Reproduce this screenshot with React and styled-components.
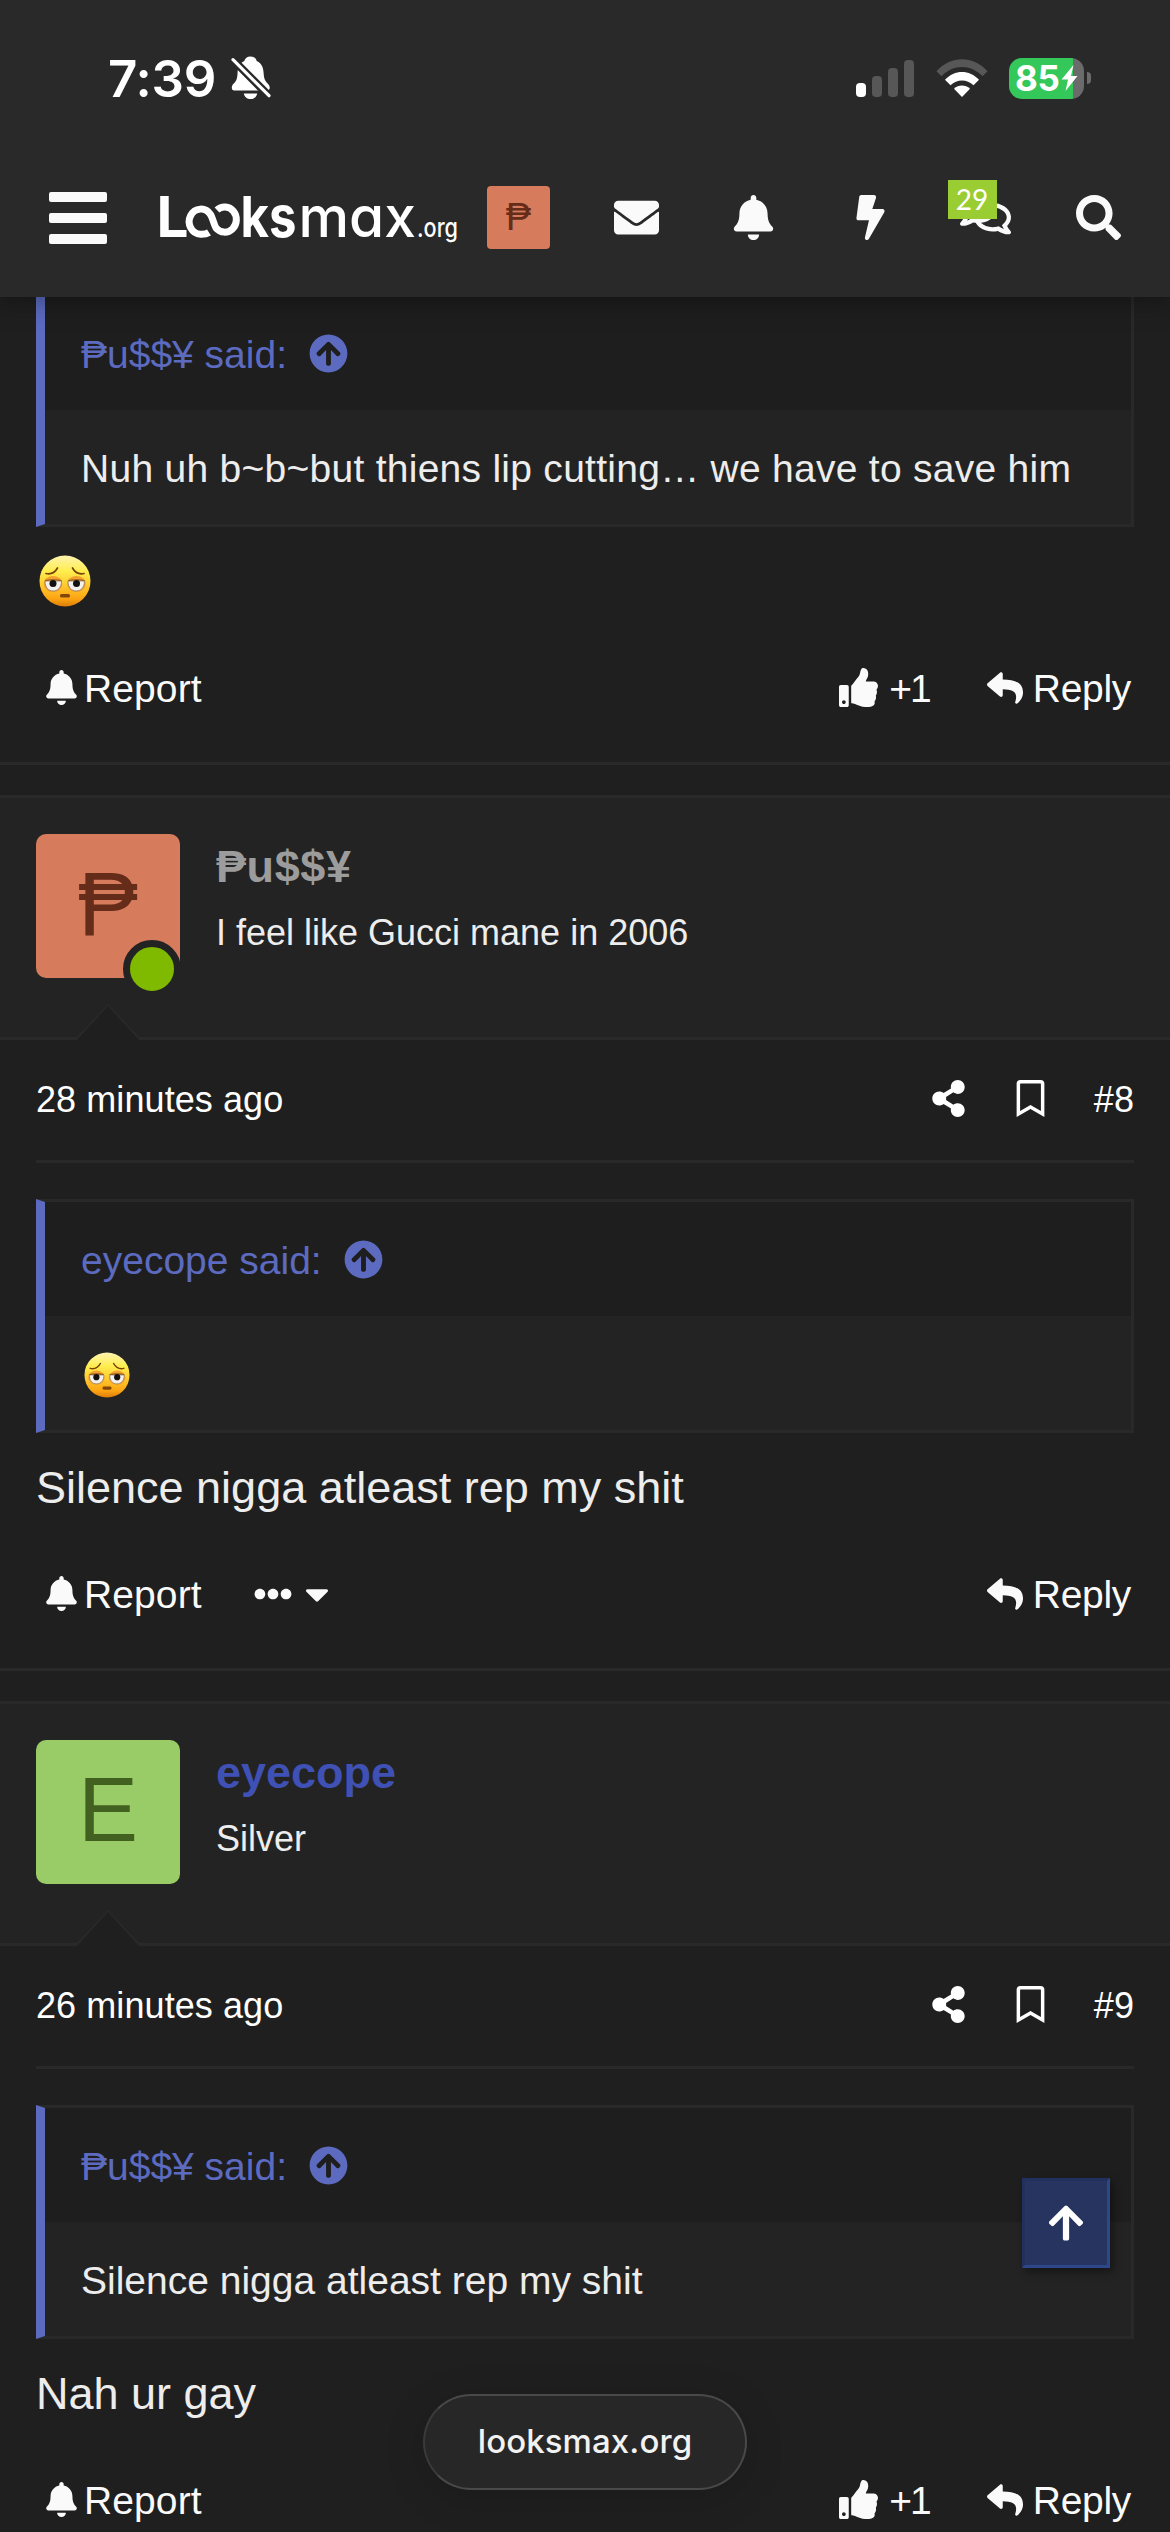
import React from 'react'
import styled, { createGlobalStyle } from 'styled-components';
import {
    FaEnvelope, FaBell, FaBolt, FaRegComments, FaSearch, FaArrowCircleUp, FaArrowUp,
    FaThumbsUp, FaReply, FaShareAlt, FaRegBookmark, FaEllipsisH, FaCaretDown
} from 'react-icons/fa';

const posts = [
    {
        id: 8,
        user: '₱u$$¥',
        title: 'I feel like Gucci mane in 2006',
        letter: '₱',
        bg: '#d67b5c',
        fg: '#662c1a',
        nameColor: '#9c9c9c',
        nameSpacing: '0.6px',
        online: true,
        time: '28 minutes ago',
        quote: { user: 'eyecope', emoji: true },
        text: 'Silence nigga atleast rep my shit',
        own: true,
    },
    {
        id: 9,
        user: 'eyecope',
        title: 'Silver',
        letter: 'E',
        bg: '#99cc66',
        fg: '#426020',
        nameColor: '#3f51b5',
        time: '26 minutes ago',
        quote: { user: '₱u$$¥', text: 'Silence nigga atleast rep my shit' },
        text: 'Nah ur gay',
    },
]

function TiredFace({ size }) {
    return (
        <svg width={size} height={size} viewBox="0 0 52 52">
            <defs>
                <linearGradient id="face" x1="0" y1="0" x2="0" y2="1">
                    <stop offset="0" stopColor="#fff3b0" />
                    <stop offset="0.3" stopColor="#ffee50" />
                    <stop offset="0.6" stopColor="#ffc82c" />
                    <stop offset="0.85" stopColor="#fba413" />
                    <stop offset="1" stopColor="#dd7c08" />
                </linearGradient>
            </defs>
            <circle cx="26" cy="26" r="25.5" fill="url(#face)" />
            <path d="M7 18.500c4.500 1 9-1 11.500-5.500M45 18.500c-4.500 1-9-1-11.500-5.500" fill="none" stroke="#7a4209" strokeWidth="1.700" strokeLinecap="round" />
            <ellipse cx="14" cy="29" rx="9.300" ry="8" fill="#f3a02f" />
            <ellipse cx="37.500" cy="29" rx="9.300" ry="8" fill="#f3a02f" />
            <path d="M6 26h16.500c0 6.500-3.500 10-8.300 10S6 32.500 6 26zM29 26h16.500c0 6.500-3.500 10-8.300 10S29 32.500 29 26z" fill="#f4f1ec" stroke="#8f7a60" strokeWidth="0.800" />
            <path d="M6 25.500c4-1 13-1 16.500 0M29 25.500c4-1 13-1 16.500 0" fill="none" stroke="#8d5a1c" strokeWidth="1.200" />
            <circle cx="14" cy="28.500" r="3.500" fill="#111" />
            <circle cx="37.500" cy="28.500" r="3.500" fill="#111" />
            <rect x="21" y="39" width="10" height="3.600" rx="1.500" fill="#83460a" />
        </svg>
    )
}

function BellSlash() {
    return (
        <svg width="40" height="44" viewBox="0 0 40 44">
            <path d="M19.500 0.500c-3.500 0-5.500 1.800-6.200 4.500C8 7.500 6.800 12 6.500 18c-.3 5-1.500 7.500-4 9.800C.2 30 0 34.500 3.200 34.500h33c3.500 0 3-4.500.8-6.700-2.500-2.300-4-4.800-4.300-9.800-.3-6-1.500-10.500-7-13-.7-2.700-2.700-4.500-6.200-4.500zM12.800 37.500h13.400c-.6 3.500-3.200 5.500-6.700 5.500s-6.100-2-6.700-5.500z" fill="#fff" />
            <path d="M2.500 4.200L38 40" stroke="#292929" strokeWidth="8" strokeLinecap="square" />
            <path d="M2 3.700L38 39.700" stroke="#fff" strokeWidth="3.200" strokeLinecap="round" />
        </svg>
    )
}

function Wifi() {
    return (
        <svg width="52" height="38" viewBox="0 0 52 38">
            <path d="M0.500 12.300C14.500-3.700 37.500-3.700 51.500 12.300L46.500 17.200C35 4.800 17 4.800 5.500 17.200z" fill="#575757" />
            <path d="M9 20.700C18.500 10.300 33.500 10.300 43 20.700L37.500 26.200C31 19.800 21 19.800 14.500 26.200z" fill="#fff" />
            <path d="M18 29.800c4.500-4.400 11.500-4.400 16 0L26 38z" fill="#fff" />
        </svg>
    )
}

function LogoMark() {
    return (
        <svg width="314" height="90" viewBox="-6 -14 314 90">
            <g fill="#fff" fontFamily="Inter, sans-serif">
                <text x="-3.500" y="50" fontSize="57" fontWeight="700" textLength="32" lengthAdjust="spacingAndGlyphs">L</text>
                <path d="M49 45.500C46 47.500 43 47.300 40.500 47.300A11.700 12.600 0 1 1 50.500 27.500C53 31.500 53 35 56 41A11.700 12.600 0 1 0 57 23" fill="none" stroke="#fff" strokeWidth="7" />
                <text x="80.500" y="50" fontSize="57" fontWeight="700" textLength="56" lengthAdjust="spacingAndGlyphs">ks</text>
                <text x="138.500" y="50" fontSize="57" fontWeight="450" textLength="117.500" lengthAdjust="spacingAndGlyphs" style={{ fontFeatureSettings: '"cv11"' }}>max</text>
                <text x="257" y="50" fontSize="26" fontWeight="500" textLength="41" lengthAdjust="spacingAndGlyphs">.org</text>
            </g>
        </svg>
    )
}

function Quote({ user, text, emoji, spacing }) {
    return (
        <QuoteBox>
            <QuoteHead>
                <QuoteText $accent>{user} said:</QuoteText>
                <FaArrowCircleUp size={39} />
            </QuoteHead>
            <QuoteBody>
                {emoji && <QuoteEmoji><TiredFace size={46} /></QuoteEmoji>}
                {text && <QuoteText $spacing={spacing}>{text}</QuoteText>}
            </QuoteBody>
        </QuoteBox>
    )
}

function ActionBar({ own }) {
    return (
        <Actions>
            <Action>
                <FaBell size={35} />
                <ActionText $gap="5px" $spacing="0.1px">Report</ActionText>
            </Action>
            {own && (
                <MoreButton>
                    <FaEllipsisH size={38} />
                    <FaCaretDown size={38} />
                </MoreButton>
            )}
            <ActionsRight>
                {!own && (
                    <Action>
                        <FaThumbsUp size={39} />
                        <ActionText $gap="11px" $spacing="-2px">+1</ActionText>
                    </Action>
                )}
                <Action>
                    <FaReply size={36} />
                    <ActionText $gap="10px" $spacing="-0.3px">Reply</ActionText>
                </Action>
            </ActionsRight>
        </Actions>
    )
}

function Post({ post }) {
    return (
        <Message>
            <UserBar>
                <Avatar $bg={post.bg} $fg={post.fg}>
                    {post.letter}
                    {post.online && <OnlineDot />}
                </Avatar>
                <UserInfo>
                    <UserName $color={post.nameColor} $spacing={post.nameSpacing}>{post.user}</UserName>
                    <UserTitle>{post.title}</UserTitle>
                </UserInfo>
            </UserBar>
            <Content>
                <Attribution>
                    <Meta>{post.time}</Meta>
                    <AttributionIcons>
                        <FaShareAlt size={37} />
                        <FaRegBookmark size={37} />
                        <Meta>#{post.id}</Meta>
                    </AttributionIcons>
                </Attribution>
                <Quote {...post.quote} />
                <BodyText>{post.text}</BodyText>
                <ActionBar own={post.own} />
            </Content>
        </Message>
    )
}

function App() {
    return (
        <Page>
            <GlobalStyle />
            <Header>
                <StatusBar>
                    <Clock>7:39</Clock>
                    <BellSlash />
                    <StatusRight>
                        <Signal>
                            <SignalBar $h={14} $on />
                            <SignalBar $h={21} />
                            <SignalBar $h={29} />
                            <SignalBar $h={37} />
                        </Signal>
                        <Wifi />
                        <Battery>
                            <BatteryBody>
                                85
                                <svg width="17" height="26" viewBox="0 0 17 26">
                                    <path d="M12.500 0L0.500 14.500h6.500L4.500 26 16.500 11h-6.500z" fill="#fff" />
                                </svg>
                            </BatteryBody>
                            <BatteryTip />
                        </Battery>
                    </StatusRight>
                </StatusBar>
                <NavBar>
                    <Burger><i /><i /><i /></Burger>
                    <Logo><LogoMark /></Logo>
                    <NavAvatar>₱</NavAvatar>
                    <NavIcons>
                        <NavItem><FaEnvelope size={45} /></NavItem>
                        <NavItem $nudge="2px"><FaBell size={45} /></NavItem>
                        <NavItem $nudge="5px"><FaBolt size={45} /></NavItem>
                        <NavItem $nudge="4px" $lift="6px">
                            <FaRegComments size={51} />
                            <Badge>29</Badge>
                        </NavItem>
                        <NavItem><FaSearch size={45} /></NavItem>
                    </NavIcons>
                </NavBar>
            </Header>

            <FirstMessage>
                <Content>
                    <Quote user="₱u$$¥" text="Nuh uh b~b~but thiens lip cutting… we have to save him" spacing="0.27px" />
                    <EmojiLine><TiredFace size={52} /></EmojiLine>
                    <ActionBar />
                </Content>
            </FirstMessage>
            {posts.map(post => <Post key={post.id} post={post} />)}

            <ScrollTop><FaArrowUp size={40} /></ScrollTop>
            <AddressPill>looksmax.org</AddressPill>
        </Page>
    )
}

export default App

const GlobalStyle = createGlobalStyle`
    body{
        margin:0;
        background:#1f1f1f;
    }
    *{
        box-sizing:border-box;
    }
    svg{
        display:block;
        flex-shrink:0;
    }
`
const Page = styled.div`
    position:relative;
    width:1170px;
    height:2532px;
    overflow:hidden;
    background:#1f1f1f;
    color:#ededed;
    font-family:"Liberation Sans", Arial, sans-serif;
    white-space:nowrap;
`
const Header = styled.header`
    position:relative;
    z-index:2;
    height:297px;
    background:#292929;
    box-shadow:0 0 26px 4px rgba(0, 0, 0, 0.35);
`
const StatusBar = styled.div`
    display:flex;
    height:156px;
    padding:0 79px 0 108px;
    align-items:center;
`
const Clock = styled.span`
    width:123px;
    font-family:Inter, sans-serif;
    font-size:51px;
    font-weight:600;
    color:#fff;
    letter-spacing:-0.2px;
`
const StatusRight = styled.div`
    display:flex;
    align-items:center;
    margin-left:auto;
`
const Signal = styled.div`
    display:flex;
    align-items:flex-end;
    gap:6px;
    height:37px;
    margin-right:22px;
`
const SignalBar = styled.i`
    width:10px;
    height:${p => p.$h}px;
    border-radius:4px;
    background:${p => p.$on ? '#fff' : '#575757'};
`
const Battery = styled.div`
    display:flex;
    align-items:center;
    margin-left:21px;
    gap:3px;
`
const BatteryBody = styled.div`
    display:flex;
    align-items:center;
    width:75px;
    height:41px;
    padding-left:6px;
    border-radius:13px;
    background:linear-gradient(90deg, #34c759 64px, #6b6b6b 64px);
    color:#fff;
    font-family:Inter, sans-serif;
    font-size:35px;
    font-weight:700;
    letter-spacing:-0.3px;
    svg{
        margin-left:1px;
    }
`
const BatteryTip = styled.i`
    width:4px;
    height:12px;
    border-radius:0 4px 4px 0;
    background:#6b6b6b;
`
const NavBar = styled.nav`
    display:flex;
    align-items:center;
    height:123px;
    padding-left:49px;
`
const Burger = styled.div`
    display:flex;
    flex-direction:column;
    gap:11px;
    width:58px;
    i{
        height:10px;
        border-radius:2px;
        background:#fafafa;
    }
`
const Logo = styled.div`
    width:333px;
    margin-left:47px;
`
const NavAvatar = styled.div`
    display:flex;
    align-items:center;
    justify-content:center;
    width:63px;
    height:63px;
    border-radius:4px;
    background:#d67b5c;
    color:#662c1a;
    font-size:38px;
`
const NavIcons = styled.div`
    display:flex;
    margin-left:29px;
    color:#fafafa;
`
const NavItem = styled.div`
    position:relative;
    display:flex;
    align-items:center;
    justify-content:center;
    width:115.5px;
    height:51px;
    padding-bottom:${p => p.$lift || 0};
    padding-left:${p => p.$nudge || 0};
`
const Badge = styled.span`
    position:absolute;
    top:-12px;
    left:22px;
    width:49px;
    height:39px;
    line-height:39px;
    text-align:center;
    background:#9acd32;
    color:#fff;
    font-family:Lato, sans-serif;
    font-size:28px;
`
const FirstMessage = styled.article`
    margin-top:-4px;
    border-bottom:3px solid #292929;
`
const Message = styled.article`
    margin-top:30px;
    border-top:3px solid #292929;
    border-bottom:3px solid #292929;
`
const UserBar = styled.div`
    position:relative;
    display:flex;
    height:242px;
    padding:36px;
    background:#232323;
    border-bottom:3px solid #292929;
    &::before,
    &::after{
        content:"";
        position:absolute;
        left:74px;
        bottom:-3px;
        border:34px solid transparent;
        border-top:0;
        border-bottom:36px solid #292929;
    }
    &::after{
        left:76px;
        bottom:-4px;
        border-width:0 32px 35px;
        border-bottom-color:#1f1f1f;
    }
`
const Avatar = styled.div`
    position:relative;
    width:144px;
    height:144px;
    border-radius:10px;
    background:${p => p.$bg};
    color:${p => p.$fg};
    font-size:90px;
    line-height:140px;
    text-align:center;
`
const OnlineDot = styled.i`
    position:absolute;
    right:-1px;
    bottom:-20px;
    width:58px;
    height:58px;
    border-radius:50%;
    border:7px solid #232323;
    background:#7fb900;
`
const UserInfo = styled.div`
    margin-left:36px;
    padding-top:3px;
`
const UserName = styled.div`
    font-size:45px;
    font-weight:700;
    line-height:60px;
    letter-spacing:${p => p.$spacing || 'normal'};
    color:${p => p.$color};
`
const UserTitle = styled.div`
    margin-top:11px;
    font-size:36px;
    line-height:50px;
`
const Content = styled.div`
    padding:0 36px;
`
const Attribution = styled.div`
    display:flex;
    align-items:center;
    justify-content:space-between;
    height:123px;
    margin-bottom:36px;
    border-bottom:3px solid #292929;
    color:#fff;
    svg{
        margin-bottom:3px;
    }
`
const AttributionIcons = styled.div`
    display:flex;
    align-items:center;
    gap:45px;
`
const Meta = styled.span`
    font-size:36px;
    letter-spacing:0.08px;
`
const QuoteBox = styled.blockquote`
    margin:0;
    height:234px;
    border:3px solid #292929;
    border-left:9px solid #5c6bc0;
`
const QuoteHead = styled.div`
    display:flex;
    align-items:center;
    gap:22px;
    height:114px;
    padding-left:36px;
    background:#1e1e1e;
    color:#5c6bc0;
`
const QuoteBody = styled.div`
    display:flex;
    align-items:center;
    height:114px;
    padding-left:36px;
    background:#232323;
`
const QuoteEmoji = styled.span`
    padding:3px 0 0 3px;
`
const QuoteText = styled.span`
    padding-top:4px;
    font-size:39px;
    letter-spacing:${p => p.$spacing || 'normal'};
    color:${p => p.$accent ? '#5c6bc0' : '#ededed'};
`
const BodyText = styled.p`
    margin:0;
    padding-top:23px;
    font-size:45px;
    line-height:63px;
`
const EmojiLine = styled.div`
    display:flex;
    align-items:center;
    height:86px;
    padding:22px 0 0 3px;
`
const Actions = styled.div`
    display:flex;
    align-items:center;
    height:149px;
    padding:0 3px 0 8px;
    color:#fafafa;
`
const ActionsRight = styled.div`
    display:flex;
    gap:57px;
    margin-left:auto;
`
const Action = styled.div`
    display:flex;
    align-items:center;
`
const ActionText = styled.span`
    padding-top:2px;
    margin-left:${p => p.$gap};
    font-size:39px;
    letter-spacing:${p => p.$spacing};
`
const MoreButton = styled.div`
    display:flex;
    align-items:center;
    gap:6px;
    margin-left:52px;
`
const ScrollTop = styled.button`
    position:absolute;
    left:1022px;
    top:2178px;
    display:flex;
    align-items:center;
    justify-content:center;
    width:88px;
    height:90px;
    border:3px solid;
    border-color:#22305f #2c478a #2c478a #22305f;
    background:#26345f;
    box-shadow:3px 4px 8px rgba(0, 0, 0, 0.4);
    color:#fff;
`
const AddressPill = styled.div`
    position:absolute;
    left:423px;
    top:2394px;
    display:flex;
    align-items:center;
    justify-content:center;
    width:324px;
    height:96px;
    padding-bottom:2px;
    border:2px solid #494949;
    border-left-color:#3a3a3a;
    border-radius:48px;
    background:#272727;
    box-shadow:0 8px 40px rgba(0, 0, 0, 0.15);
    font-family:Inter, sans-serif;
    font-size:33px;
    font-weight:500;
    letter-spacing:0.1px;
    color:#f2f2f2;
`
